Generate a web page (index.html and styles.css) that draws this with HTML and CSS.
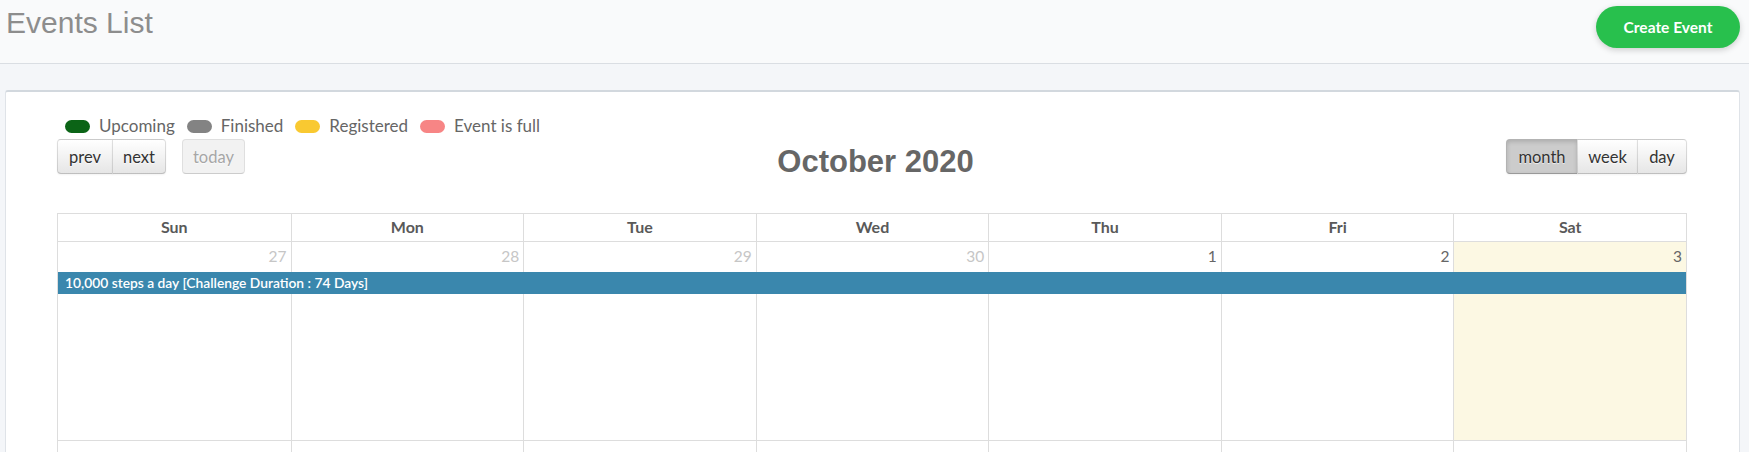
FILE: index.html
```html
<!DOCTYPE html>
<html>
<head>
<meta charset="utf-8">
<link rel="stylesheet" href="styles.css">
</head>
<body>
<header class="topbar">
  <h1 class="page-title">Events List</h1>
  <button class="btn-create">Create Event</button>
</header>
<main class="content">
  <section class="card">
    <div class="legend">
      <span class="legend-item"><span class="pill pill-upcoming"></span>Upcoming</span>
      <span class="legend-item"><span class="pill pill-finished"></span>Finished</span>
      <span class="legend-item"><span class="pill pill-registered"></span>Registered</span>
      <span class="legend-item"><span class="pill pill-full"></span>Event is full</span>
    </div>
    <div class="toolbar">
      <div class="tb-left">
        <div class="btn-group">
          <button class="fc-btn first">prev</button><button class="fc-btn last">next</button>
        </div>
        <button class="fc-btn single disabled">today</button>
      </div>
      <h2 class="cal-title">October 2020</h2>
      <div class="btn-group">
        <button class="fc-btn first active">month</button><button class="fc-btn mid">week</button><button class="fc-btn last">day</button>
      </div>
    </div>
    <div class="calendar">
      <div class="head-row">
        <div class="head-cell">Sun</div>
        <div class="head-cell">Mon</div>
        <div class="head-cell">Tue</div>
        <div class="head-cell">Wed</div>
        <div class="head-cell">Thu</div>
        <div class="head-cell">Fri</div>
        <div class="head-cell">Sat</div>
      </div>
      <div class="week">
        <div class="bg c1"></div>
        <div class="bg c2"></div>
        <div class="bg c3"></div>
        <div class="bg c4"></div>
        <div class="bg c5"></div>
        <div class="bg c6"></div>
        <div class="bg c7 today"></div>
        <div class="num c1 other">27</div>
        <div class="num c2 other">28</div>
        <div class="num c3 other">29</div>
        <div class="num c4 other">30</div>
        <div class="num c5">1</div>
        <div class="num c6">2</div>
        <div class="num c7">3</div>
        <div class="event">10,000 steps a day [Challenge Duration : 74 Days]</div>
      </div>
      <div class="week">
        <div class="bg c1"></div>
        <div class="bg c2"></div>
        <div class="bg c3"></div>
        <div class="bg c4"></div>
        <div class="bg c5"></div>
        <div class="bg c6"></div>
        <div class="bg c7"></div>
      </div>
    </div>
  </section>
</main>
</body>
</html>
```

FILE: styles.css
```css
* { box-sizing: border-box; }
html, body { margin: 0; padding: 0; }
body {
  background: #f4f6f9;
  font-family: Lato, "Open Sans", sans-serif;
  color: #555;
  overflow: hidden;
}
.topbar {
  height: 64px;
  background: #f9fafb;
  border-bottom: 1px solid #dadee3;
  display: flex;
  justify-content: space-between;
  align-items: flex-start;
  padding: 0 9px 0 6px;
}
.page-title {
  margin: 6px 0 0;
  font-family: "Liberation Sans", Arial, sans-serif;
  font-weight: normal;
  font-size: 30px;
  line-height: 34px;
  color: #8d8d8d;
}
.btn-create {
  margin-top: 6px;
  width: 144px;
  height: 42px;
  border: none;
  border-radius: 21px;
  background: #28c04d;
  color: #fff;
  font-family: Lato, sans-serif;
  font-weight: 700;
  font-size: 15.5px;
  box-shadow: 0 2px 6px rgba(0,0,0,0.18);
}
.content { padding: 26px 9px 0 5px; }
.card {
  background: #fff;
  border: 1px solid #dfe3e8;
  border-top: 2px solid #d2d8de;
  border-radius: 3px;
  padding: 0 52px 40px 51px;
  min-height: 400px;
}
.legend {
  padding: 24px 0 0 8px;
  height: 44px;
  display: flex;
  align-items: center;
  font-size: 17px;
  line-height: 20px;
  color: #666;
}
.legend-item { display: inline-flex; align-items: center; margin-right: 12px; }
.pill {
  display: inline-block;
  width: 25px;
  height: 13px;
  border-radius: 7px;
  margin-right: 9px;
}
.pill-upcoming { background: #0b6416; }
.pill-finished { background: #838383; }
.pill-registered { background: #f9c931; }
.pill-full { background: #f78585; }
.toolbar {
  margin-top: 3px;
  display: flex;
  justify-content: space-between;
  align-items: flex-start;
}
.tb-left { display: flex; gap: 16px; }
.btn-group { display: flex; }
.fc-btn {
  height: 35px;
  padding: 0 10px;
  font-family: Lato, sans-serif;
  font-size: 16.5px;
  color: #333;
  background: linear-gradient(#ffffff, #e6e6e6);
  border: 1px solid rgba(0,0,0,0.12);
  border-bottom-color: rgba(0,0,0,0.25);
  box-shadow: inset 0 1px 0 rgba(255,255,255,0.2), 0 1px 2px rgba(0,0,0,0.05);
  text-shadow: 0 1px 1px rgba(255,255,255,0.75);
  margin: 0;
}
.fc-btn.first { border-radius: 4px 0 0 4px; }
.fc-btn.last { border-radius: 0 4px 4px 0; margin-left: -1px; }
.fc-btn.mid { border-radius: 0; margin-left: -1px; }
.fc-btn.single { border-radius: 4px; }
.fc-btn.disabled { opacity: 0.65; box-shadow: none; color: #777; background: #ececec; }
.fc-btn.active {
  background: #cccccc;
  box-shadow: inset 0 2px 4px rgba(0,0,0,0.15), 0 1px 2px rgba(0,0,0,0.05);
}
.tb-left .btn-group .fc-btn.first { width: 56px; }
.tb-left .btn-group .fc-btn.last { width: 54px; }
.tb-left .single { width: 63px; }
.toolbar > .btn-group .first { width: 72px; }
.toolbar > .btn-group .mid { width: 61px; }
.toolbar > .btn-group .last { width: 50px; }
.cal-title {
  margin: 5px 0 0;
  font-family: "Liberation Sans", Arial, sans-serif;
  font-weight: bold;
  font-size: 31px;
  line-height: 36px;
  color: #666;
}
.calendar { margin-top: 33px; }
.head-row {
  display: grid;
  grid-template-columns: repeat(7, 1fr);
  border: 1px solid #ddd;
  height: 29px;
}
.head-cell {
  border-left: 1px solid #ddd;
  text-align: center;
  font-weight: 700;
  font-size: 16px;
  line-height: 26px;
  color: #595959;
}
.head-cell:first-child { border-left: none; }
.week {
  display: grid;
  grid-template-columns: repeat(7, 1fr);
  grid-template-rows: 30px 22px 146px;
  border: 1px solid #ddd;
  border-top: none;
}
.bg { grid-row: 1 / -1; border-left: 1px solid #ddd; }
.bg.c1 { border-left: none; }
.bg.today { background: #fcf8e3; }
.c1 { grid-column: 1; }
.c2 { grid-column: 2; }
.c3 { grid-column: 3; }
.c4 { grid-column: 4; }
.c5 { grid-column: 5; }
.c6 { grid-column: 6; }
.c7 { grid-column: 7; }
.num {
  grid-row: 1;
  text-align: right;
  padding: 4px 4px 0 0;
  font-size: 15.5px;
  line-height: 20px;
  color: #666;
}
.num.other { color: #c6c6c6; }
.event {
  grid-row: 2;
  grid-column: 1 / -1;
  background: #3a87ad;
  color: #fff;
  font-size: 13.8px;
  font-weight: 600;
  line-height: 22px;
  padding-left: 7px;
  white-space: nowrap;
}
```
